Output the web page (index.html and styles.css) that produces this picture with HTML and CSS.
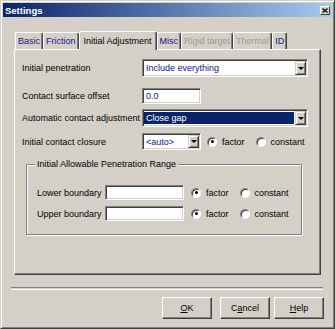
FILE: index.html
```html
<!DOCTYPE html>
<html lang="en">
<head>
    <meta charset="UTF-8">
    <meta name="viewport" content="width=device-width, initial-scale=1.0">
    <title>Settings</title>
    <link rel="stylesheet" href="styles.css">
</head>
<body>
    <div class="window">
        <div class="titlebar">
            <span class="title">Settings</span>
            <span class="close">
                <svg width="6" height="5" viewBox="0 0 6 5"><path d="M0.5 0.5 L5.5 4.5 M5.5 0.5 L0.5 4.5" stroke="#000" stroke-width="1.2"/></svg>
            </span>
        </div>

        <div class="tabs">
            <div class="tab">Basic</div>
            <div class="tab">Friction</div>
            <div class="tab active">Initial Adjustment</div>
            <div class="tab">Misc</div>
            <div class="tab disabled">Rigid target</div>
            <div class="tab disabled">Thermal</div>
            <div class="tab">ID</div>
        </div>

        <div class="panel">
            <div class="form-row row-1">
                <label>Initial penetration</label>
                <div class="combo wide">
                    <span class="value">Include everything</span>
                    <span class="drop"><i></i></span>
                </div>
            </div>
            <div class="form-row row-2">
                <label>Contact surface offset</label>
                <div class="field short"><span class="value">0.0</span></div>
            </div>
            <div class="form-row row-3">
                <label>Automatic contact adjustment</label>
                <div class="combo wide">
                    <span class="value selected">Close gap</span>
                    <span class="drop"><i></i></span>
                </div>
            </div>
            <div class="form-row row-4">
                <label>Initial contact closure</label>
                <div class="combo short">
                    <span class="value">&lt;auto&gt;</span>
                    <span class="drop"><i></i></span>
                </div>
                <span class="radio on first"></span><span class="radio-text">factor</span>
                <span class="radio"></span><span class="radio-text">constant</span>
            </div>

            <div class="group">
                <span class="group-title">Initial Allowable Penetration Range</span>
                <div class="group-row">
                    <label>Lower boundary</label>
                    <div class="field bound"></div>
                    <span class="radio on first"></span><span class="radio-text">factor</span>
                    <span class="radio"></span><span class="radio-text">constant</span>
                </div>
                <div class="group-row">
                    <label>Upper boundary</label>
                    <div class="field bound"></div>
                    <span class="radio on first"></span><span class="radio-text">factor</span>
                    <span class="radio"></span><span class="radio-text">constant</span>
                </div>
            </div>
        </div>

        <div class="separator"></div>

        <div class="buttons">
            <button class="btn"><u>O</u>K</button>
            <button class="btn">C<u>a</u>ncel</button>
            <button class="btn"><u>H</u>elp</button>
        </div>
    </div>
</body>
</html>
```

FILE: styles.css
```css
body {
    margin: 0;
    font-family: "Liberation Sans", Arial, sans-serif;
    font-size: 9px;
    color: #000;
}

.window {
    width: 335px;
    height: 329px;
    box-sizing: border-box;
    padding: 2px;
    background: #d4d0c8;
    border: 1px solid;
    border-color: #d4d0c8 #404040 #404040 #d4d0c8;
    box-shadow: inset 1px 1px 0 #fff, inset -1px -1px 0 #808080;
    display: flex;
    flex-direction: column;
}

/* title bar */
.titlebar {
    height: 14px;
    display: flex;
    align-items: center;
    justify-content: space-between;
    background: linear-gradient(to right, #0a246a, #a6caf0);
    flex-shrink: 0;
}

.title {
    color: #fff;
    font-weight: bold;
    font-size: 9.5px;
    padding-left: 2px;
}

.close {
    width: 10px;
    height: 9px;
    margin-right: 2px;
    box-sizing: border-box;
    background: #d4d0c8;
    border: 1px solid;
    border-color: #fff #404040 #404040 #fff;
    display: flex;
    align-items: center;
    justify-content: center;
}

/* tabs */
.tabs {
    display: flex;
    align-items: flex-end;
    height: 19px;
    margin: 13px 0 0 12px;
    flex-shrink: 0;
}

.tab {
    height: 17px;
    line-height: 17px;
    box-sizing: border-box;
    padding: 0 2px;
    color: #14148c;
    border-top: 1px solid #fff;
    border-left: 1px solid #fff;
    border-right: 1px solid #404040;
    border-radius: 2px 3px 0 0;
    box-shadow: inset -1px 0 0 #808080;
    white-space: nowrap;
}

.tab.active {
    height: 19px;
    line-height: 18px;
    padding: 0 4px;
    margin-bottom: -1px;
    color: #000;
    background: #d4d0c8;
    position: relative;
    z-index: 1;
}

.tab.disabled {
    color: #9c9a94;
}

/* tab page */
.panel {
    width: 307px;
    height: 226px;
    margin-left: 11px;
    box-sizing: border-box;
    padding: 9px 0 0 7px;
    border: 1px solid;
    border-color: #fff #404040 #404040 #fff;
    box-shadow: inset -1px -1px 0 #808080;
    flex-shrink: 0;
}

.form-row {
    display: flex;
    align-items: center;
}

.form-row label {
    width: 120px;
    flex-shrink: 0;
}

.row-2 { margin-top: 11px; }
.row-3 { margin-top: 5px; }
.row-4 { margin-top: 6px; }

/* sunken controls */
.combo,
.field {
    box-sizing: border-box;
    display: flex;
    align-items: center;
    background: #fcfdff;
    border: 1px solid;
    border-color: #808080 #fff #fff #808080;
    box-shadow: inset 1px 1px 0 #404040, inset -1px -1px 0 #d4d0c8;
    padding: 1px;
}

.combo { height: 18px; }
.combo.wide { width: 166px; }
.combo.short { width: 59px; height: 17px; }

.field.short { width: 59px; height: 16px; }
.field.bound { width: 79px; height: 15px; }

.value {
    flex: 1;
    align-self: stretch;
    display: flex;
    align-items: center;
    padding-left: 2px;
    color: #14148c;
    white-space: nowrap;
}

.value.selected {
    background: #0a246a;
    color: #fff;
    margin: 1px 1px 1px 0;
}

.drop {
    width: 11px;
    align-self: stretch;
    box-sizing: border-box;
    background: #d4d0c8;
    border: 1px solid;
    border-color: #d4d0c8 #404040 #404040 #d4d0c8;
    box-shadow: inset 1px 1px 0 #fff, inset -1px -1px 0 #808080;
    display: flex;
    align-items: center;
    justify-content: center;
}

.drop i {
    width: 0;
    height: 0;
    border-left: 3px solid transparent;
    border-right: 3px solid transparent;
    border-top: 3px solid #000;
}

/* radio buttons */
.radio {
    width: 10px;
    height: 10px;
    box-sizing: border-box;
    border-radius: 50%;
    background: #fff;
    border: 1px solid;
    border-color: #808080 #fff #fff #808080;
    box-shadow: inset 1px 1px 0 #404040;
    margin-left: 11px;
    display: flex;
    align-items: center;
    justify-content: center;
    flex-shrink: 0;
}

.radio.on::after {
    content: "";
    width: 3px;
    height: 3px;
    border-radius: 50%;
    background: #000;
}

.form-row .radio.first { margin-left: 6px; }
.group-row .radio.first { margin-left: 7px; }

.radio-text {
    margin-left: 5px;
}

/* group box */
.group {
    width: 276px;
    margin: 14px 0 0 4px;
    box-sizing: border-box;
    padding: 0 0 13px 10px;
    border: 1px solid #808080;
    box-shadow: inset 1px 1px 0 #fff, 1px 1px 0 #fff;
}

.group-title {
    display: inline-block;
    line-height: 11px;
    margin: -6px 0 0 -2px;
    padding: 0 2px;
    background: #d4d0c8;
    vertical-align: top;
}

.group-row {
    display: flex;
    align-items: center;
    margin-top: 6px;
}

.group-title + .group-row { margin-top: 10px; }

.group-row label {
    width: 68px;
    flex-shrink: 0;
}

/* bottom */
.separator {
    width: 312px;
    height: 1px;
    margin: 12px 0 0 8px;
    border-top: 1px solid #808080;
    border-bottom: 1px solid #fff;
    flex-shrink: 0;
}

.buttons {
    display: flex;
    justify-content: flex-end;
    gap: 8px;
    margin: 7px 8px 0 0;
}

.btn {
    width: 50px;
    height: 22px;
    font-family: inherit;
    font-size: 9px;
    color: #000;
    background: #d4d0c8;
    border: 1px solid;
    border-color: #fff #404040 #404040 #fff;
    box-shadow: inset -1px -1px 0 #808080;
    padding: 0;
}

.btn:last-child { margin-left: -4px; }
```
